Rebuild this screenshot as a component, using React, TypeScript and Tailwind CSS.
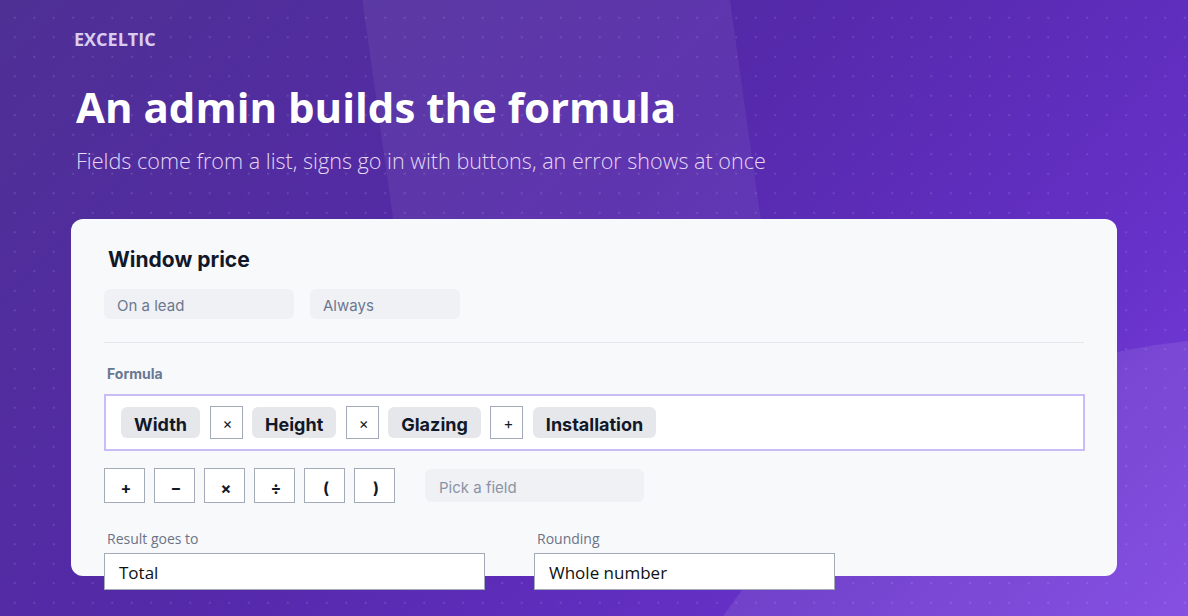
import React from 'react';

const chips: { kind: 'field' | 'op'; text: string }[] = [
  { kind: 'field', text: 'Width' },
  { kind: 'op', text: '×' },
  { kind: 'field', text: 'Height' },
  { kind: 'op', text: '×' },
  { kind: 'field', text: 'Glazing' },
  { kind: 'op', text: '+' },
  { kind: 'field', text: 'Installation' },
];

const signs = ['+', '−', '×', '÷', '(', ')'];

const App: React.FC = () => {
  return (
    <div className="relative w-[1188px] h-[616px] overflow-hidden bg-[linear-gradient(135deg,#4e3094_0%,#5529aa_45%,#6430c6_75%,#7a3fe0_100%)]">
      {/* soft shapes behind */}
      <div className="absolute left-[381px] top-[-210px] w-[364px] h-[660px] rounded-full bg-white/[0.06] -rotate-[8deg]" />
      <div className="absolute left-[612px] top-[338px] w-[1276px] h-[1276px] rounded-full bg-white/[0.09]" />
      {/* dot grid */}
      <div className="absolute inset-0 bg-[radial-gradient(rgba(255,255,255,0.12)_1px,transparent_1.2px)] bg-[size:19.5px_19.5px] bg-[position:5px_8px]" />

      <div className="relative pl-[71px] pt-[28px] font-['Open_Sans','Noto_Sans',sans-serif]">
        <div className="pl-[3px] text-[18px] font-bold leading-[22px] text-[#d9cdef]">EXCELTIC</div>
        <h1 className="pl-[5px] mt-[29px] text-[42px] font-bold leading-[56px] text-white">An admin builds the formula</h1>
        <p className="pl-[5px] mt-[11px] text-[21.6px] font-light leading-[30px] text-[#e3d8f6]">
          Fields come from a list, signs go in with buttons, an error shows at once
        </p>

        {/* card */}
        <div className="mt-[43px] w-[1046px] h-[357px] rounded-xl bg-[#f8f9fb] px-[33px] pt-[26px] font-['Inter',sans-serif]">
          <h2 className="pl-[4px] text-[21px] font-bold leading-[30px] text-[#111827]">Window price</h2>
          <div className="mt-[14px] flex gap-4">
            <div className="w-[190px] h-[30px] rounded-md bg-[#f0f1f4] px-[13px] pt-[2px] text-[15px] leading-[30px] text-[#6b7890]">On a lead</div>
            <div className="w-[150px] h-[30px] rounded-md bg-[#f0f1f4] px-[13px] pt-[2px] text-[15px] leading-[30px] text-[#6b7890]">Always</div>
          </div>
          <div className="mt-[23px] h-px w-[980px] bg-[#e4e6ea]" />

          <div className="mt-[21px] pl-[3px] text-[14px] font-bold leading-[20px] text-[#687791]">Formula</div>
          <div className="mt-[10px] w-[981px] h-[57px] border-2 border-[#c9bcf7] bg-white flex items-center gap-[9.5px] px-[15px]">
            {chips.map((c, i) =>
              c.kind === 'field' ? (
                <div key={i} className="h-[31px] rounded-md bg-[#e5e7eb] px-[13px] pt-[2px] text-[18px] font-bold leading-[31px] text-[#111827]">
                  {c.text}
                </div>
              ) : (
                <div key={i} className="w-[33px] h-[33px] border border-[#a3aab8] bg-white flex items-end justify-center pb-[7px] pl-[3px] text-[15px] leading-none text-[#111827]">
                  {c.text}
                </div>
              )
            )}
          </div>

          <div className="mt-[17px] flex items-center">
            <div className="flex gap-[9px]">
              {signs.map((s) => (
                <button
                  key={s}
                  type="button"
                  className="w-[41px] h-[35px] border border-[#a3aab8] bg-white flex items-end justify-center pb-[6px] pl-[3px] text-[16px] font-bold leading-none text-[#111827]"
                >
                  {s}
                </button>
              ))}
            </div>
            <div className="ml-[30px] w-[219px] h-[33px] rounded-md bg-[#f0f1f4] px-[14px] pt-[2px] text-[15px] leading-[33px] text-[#8a94a6]">Pick a field</div>
          </div>

          <div className="mt-[26px] flex gap-[49px] font-['Open_Sans','Noto_Sans',sans-serif]">
            <div className="w-[381px]">
              <div className="pl-[3px] text-[14px] leading-[20px] text-[#6b7386]">Result goes to</div>
              <div className="mt-[4px] h-[37px] border border-[#a3aab8] bg-white px-[14px] text-[17px] leading-[38px] text-[#111]">Total</div>
            </div>
            <div className="w-[301px]">
              <div className="pl-[3px] text-[14px] leading-[20px] text-[#6b7386]">Rounding</div>
              <div className="mt-[4px] h-[37px] border border-[#a3aab8] bg-white px-[14px] text-[17px] leading-[38px] text-[#111]">Whole number</div>
            </div>
          </div>
        </div>
      </div>
    </div>
  );
};

export default App;
